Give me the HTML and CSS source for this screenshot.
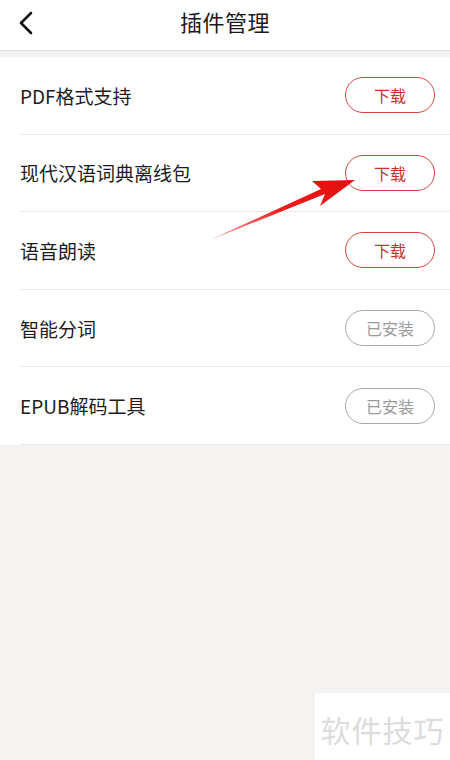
FILE: index.html
```html
<!DOCTYPE html>
<html lang="zh">
<head>
<meta charset="utf-8">
<link rel="stylesheet" href="styles.css">
</head>
<body>
<div class="page">
  <header class="topbar">
    <svg class="back" width="16" height="24" viewBox="0 0 16 24"><path d="M13 2 L3 12 L13 22" fill="none" stroke="#111" stroke-width="2.6" stroke-linecap="round" stroke-linejoin="round"/></svg>
    <h1 class="title">插件管理</h1>
  </header>
  <ul class="list">
    <li class="row"><span class="name">PDF格式支持</span><span class="btn btn-red">下载</span></li>
    <li class="row"><span class="name">现代汉语词典离线包</span><span class="btn btn-red">下载</span></li>
    <li class="row"><span class="name">语音朗读</span><span class="btn btn-red">下载</span></li>
    <li class="row"><span class="name">智能分词</span><span class="btn btn-grey">已安装</span></li>
    <li class="row"><span class="name">EPUB解码工具</span><span class="btn btn-grey">已安装</span></li>
  </ul>
  <svg class="arrow" width="160" height="90" viewBox="0 0 160 90">
    <defs>
      <linearGradient id="ag" x1="0" y1="1" x2="1" y2="0">
        <stop offset="0" stop-color="#f04a4a" stop-opacity="0.6"/>
        <stop offset="0.5" stop-color="#ee1c1c"/>
        <stop offset="1" stop-color="#e30e0e"/>
      </linearGradient>
    </defs>
    <path d="M2 82 L117 36 L112 48 L147 22 L104 23 L113 31 Z" fill="url(#ag)"/>
  </svg>
  <div class="watermark">软件技巧</div>
</div>
</body>
</html>
```
FILE: styles.css
```css
* { box-sizing: border-box; }
html, body { margin: 0; padding: 0; }
body {
  background: #f4f3f1;
  font-family: "Noto Sans CJK SC", "Noto Sans", sans-serif;
  width: 450px;
  height: 760px;
  overflow: hidden;
}
.page { position: relative; width: 450px; height: 760px; }
.topbar {
  position: relative;
  height: 51px;
  padding-bottom: 8px;
  background: #fff;
  border-bottom: 1px solid #e6e4e1;
  display: flex;
  align-items: center;
  justify-content: center;
}
.back { position: absolute; left: 18px; top: 11px; }
.title {
  margin: 0;
  font-size: 22px;
  line-height: 30px;
  font-weight: 400;
  color: #1a1a1a;
  letter-spacing: 0.5px;
}
.list {
  list-style: none;
  margin: 6px 0 0;
  padding: 0 0 0 20px;
  background: #fff;
}
.row {
  height: 77.6px;
  display: flex;
  align-items: center;
  justify-content: space-between;
  padding-right: 15px;
  border-bottom: 1px solid #ebe9e6;
}
.name {
  font-size: 19px;
  color: #1c1c1c;
}
.btn {
  width: 90px;
  height: 36px;
  border-radius: 18px;
  display: flex;
  align-items: center;
  justify-content: center;
  font-size: 16px;
  border: 1px solid;
}
.btn-red { color: #c9302c; border-color: #cf4440; }
.btn-grey { color: #9a9a9a; border-color: #a8a8a8; }
.arrow { position: absolute; left: 208px; top: 158px; }
.watermark {
  position: absolute;
  left: 315px;
  top: 693px;
  width: 135px;
  height: 67px;
  background: #fff;
  color: #dcdcdc;
  font-size: 30px;
  display: flex;
  align-items: center;
  justify-content: center;
  padding-top: 4px;
  letter-spacing: 1px;
}
```
